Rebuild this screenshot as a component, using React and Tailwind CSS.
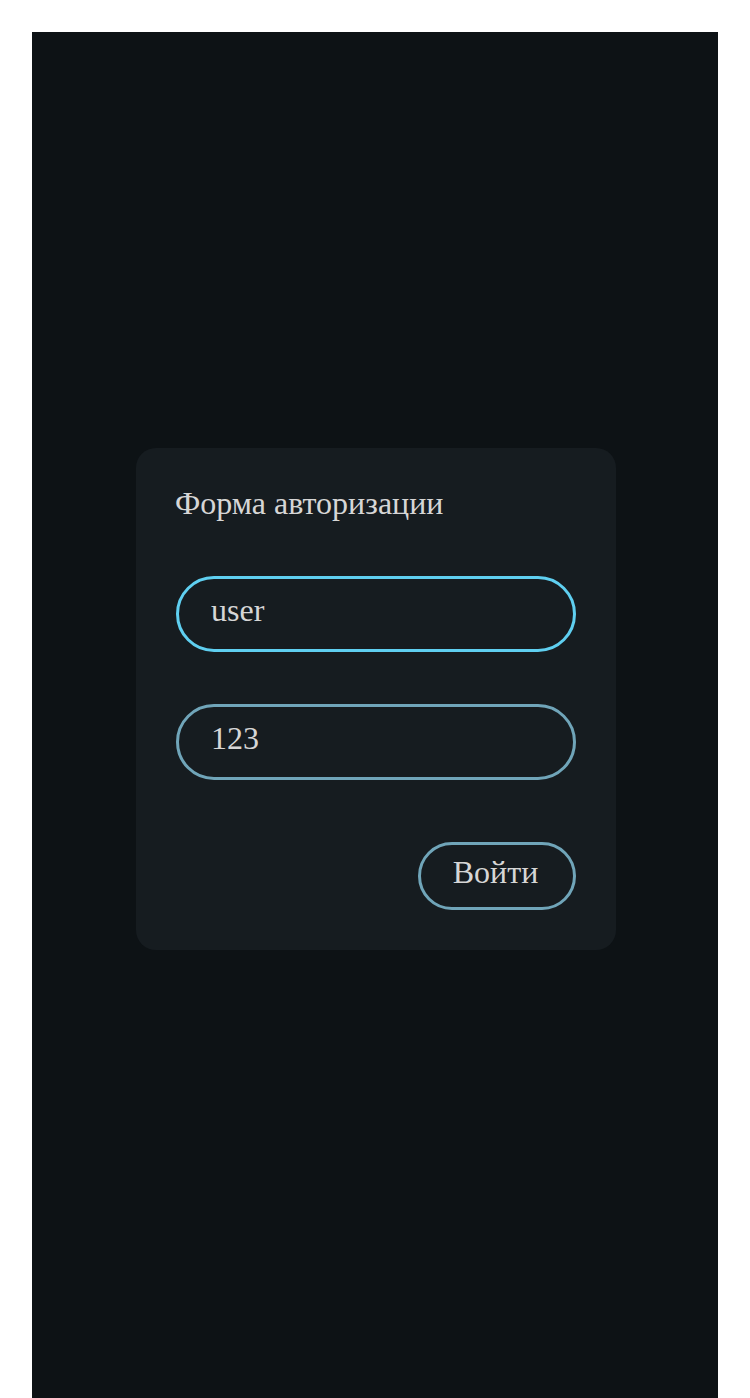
export default function App() {
  return (
    <div className="bg-white px-8 pt-8 font-['Liberation_Serif',serif]">
      <div className="flex h-[1366px] flex-col items-center bg-[#0d1215] pl-[2px] pt-[416px]">
        <div className="w-[480px] rounded-[20px] bg-[#161c20] p-10">
          <h1 className="-ml-px -mt-px text-[32px] leading-[32px] text-[#d6d6d6]">Форма авторизации</h1>
          <div className="mt-[57px] flex flex-col gap-[52px]">
            <input
              className="h-[76px] w-full rounded-full border-[3px] border-[#5fcff0] bg-transparent px-8 pb-[8px] text-[32px] text-[#d6d6d6] outline-none"
              defaultValue="user"
            />
            <input
              className="h-[76px] w-full rounded-full border-[3px] border-[#70a5b9] bg-transparent px-8 pb-[8px] text-[32px] text-[#d6d6d6] outline-none"
              defaultValue="123"
            />
          </div>
          <div className="mt-[62px] flex justify-end">
            <button className="h-[68px] w-[158px] rounded-full border-[3px] border-[#70a5b9] pb-[8px] pr-[3px] text-[32px] leading-[36px] text-[#d6d6d6]">
              Войти
            </button>
          </div>
        </div>
      </div>
    </div>
  )
}
